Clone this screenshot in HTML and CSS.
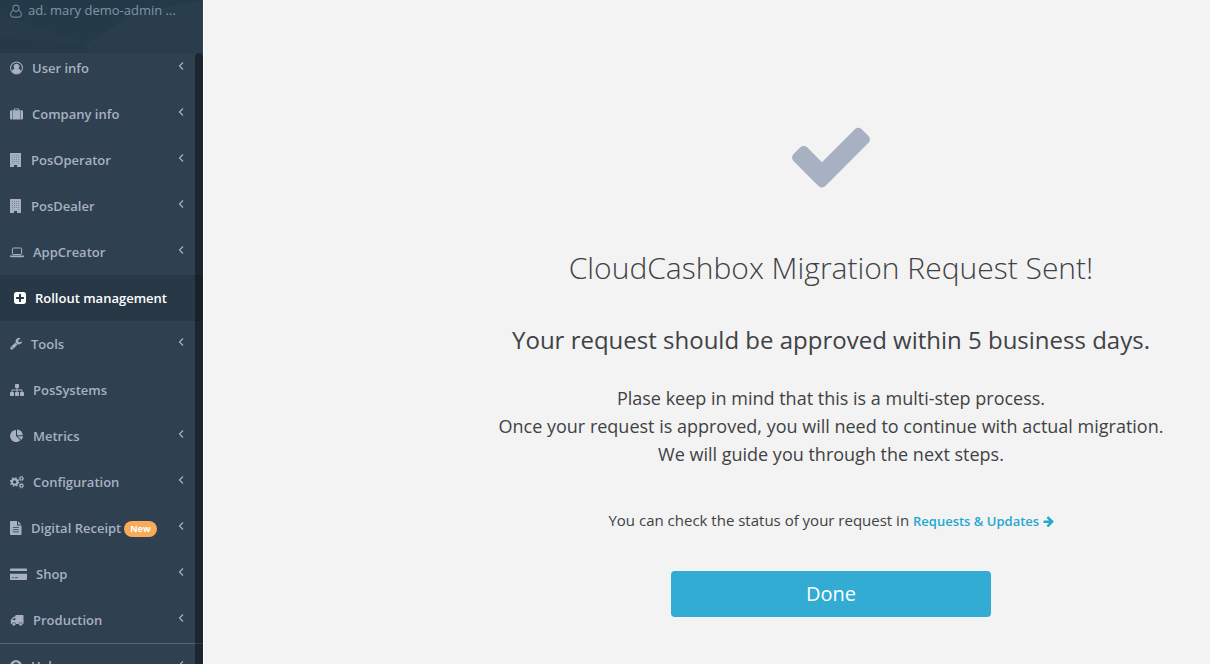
FILE: index.html
```html
<!DOCTYPE html>
<html lang="en">
<head>
<meta charset="utf-8">
<title>CloudCashbox Migration</title>
<link rel="stylesheet" href="styles.css">
</head>
<body>
<div class="app">
  <aside class="sidebar">
    <div class="profile">
      <svg class="facets" viewBox="0 0 203 53" preserveAspectRatio="none" aria-hidden="true"><path fill="#273b4a" d="M0 14 86 44 100 53H0z"/><path fill="#293d4c" d="M86 44 130 15 203 0V53H90z"/><path fill="#253947" d="M0 38 86 44 80 53H0z"/></svg>
      <svg class="icon w12" viewBox="0 0 12 14" fill="none" stroke="currentColor" aria-hidden="true"><circle cx="6" cy="4.2" r="3.2"/><path d="M3.3 6.4C1.3 7 .7 8.8.7 10.900q0 2.200 2 2.200h6.600q2 0 2-2.200C11.300 8.800 10.700 7 8.700 6.400"/></svg>
      <span class="profile-name">ad. mary demo-admin ...</span>
    </div>
    <div class="scroller">
      <nav class="menu">
        <a class="item" href="#"><svg class="icon w13" viewBox="0 0 14 14" aria-hidden="true"><circle cx="7" cy="7" r="6.400" fill="none" stroke="currentColor" stroke-width="1.100"/><path fill="currentColor" d="M7 2.400a3.100 3.100 0 0 1 2.100 5.400c1.700.3 2.600 1.500 2.800 3.300A6 6 0 0 1 7 13.300a6 6 0 0 1-4.900-2.200c.2-1.800 1.100-3 2.800-3.300A3.100 3.100 0 0 1 7 2.400z"/></svg><span>User info</span><svg class="chev" viewBox="0 0 6 10"><path d="M5 1.500 1.500 5 5 8.500"/></svg></a>
        <a class="item" href="#"><svg class="icon w13" viewBox="0 0 14 14" fill="currentColor" aria-hidden="true"><path fill-rule="evenodd" d="M4 3V1.800Q4 1 4.800 1h4.400q.8 0 .8.800V3h.9v10H3.100V3zm1 0h4V2H5zM2.600 3v10H1.500Q0 13 0 11.500v-7Q0 3 1.500 3zM11.400 3h1.100Q14 3 14 4.500v7q0 1.500-1.500 1.500h-1.100z"/></svg><span>Company info</span><svg class="chev" viewBox="0 0 6 10"><path d="M5 1.500 1.500 5 5 8.500"/></svg></a>
        <a class="item" href="#"><svg class="icon w12" viewBox="0 0 12 14" aria-hidden="true"><path fill="currentColor" d="M.5 0h10q.5 0 .5.500v13q0 .5-.5.500H7v-2H4v2H.5q-.5 0-.5-.5V.5Q0 0 .5 0z"/><path stroke="#2f4050" stroke-opacity=".6" stroke-width=".6" stroke-dasharray="1 1" d="M2.400 2v9M4.500 2v8M6.500 2v8M8.600 2v9"/></svg><span>PosOperator</span><svg class="chev" viewBox="0 0 6 10"><path d="M5 1.500 1.500 5 5 8.500"/></svg></a>
        <a class="item" href="#"><svg class="icon w12" viewBox="0 0 12 14" aria-hidden="true"><path fill="currentColor" d="M.5 0h10q.5 0 .5.500v13q0 .5-.5.500H7v-2H4v2H.5q-.5 0-.5-.5V.5Q0 0 .5 0z"/><path stroke="#2f4050" stroke-opacity=".6" stroke-width=".6" stroke-dasharray="1 1" d="M2.400 2v9M4.500 2v8M6.500 2v8M8.600 2v9"/></svg><span>PosDealer</span><svg class="chev" viewBox="0 0 6 10"><path d="M5 1.500 1.500 5 5 8.500"/></svg></a>
        <a class="item" href="#"><svg class="icon w14" viewBox="0 0 14 14" aria-hidden="true"><rect x="2.400" y="3" width="9.200" height="6.500" rx=".7" fill="none" stroke="currentColor"/><path fill="currentColor" d="M0 10.600h14v.7q0 .9-1.100.9H1.100Q0 12.200 0 11.300z"/></svg><span>AppCreator</span><svg class="chev" viewBox="0 0 6 10"><path d="M5 1.500 1.500 5 5 8.500"/></svg></a>
        <a class="item active" href="#" aria-current="page"><svg class="icon w12" viewBox="128 128 1536 1536" fill="currentColor" aria-hidden="true"><path d="M1408 960v-128q0-26-19-45t-45-19h-320v-320q0-26-19-45t-45-19h-128q-26 0-45 19t-19 45v320h-320q-26 0-45 19t-19 45v128q0 26 19 45t45 19h320v320q0 26 19 45t45 19h128q26 0 45-19t19-45v-320h320q26 0 45-19t19-45zm256-544v960q0 119-84.500 203.500t-203.500 84.500h-960q-119 0-203.500-84.500t-84.500-203.500v-960q0-119 84.500-203.500t203.500-84.500h960q119 0 203.500 84.500t84.500 203.500z"/></svg><span>Rollout management</span></a>
        <a class="item" href="#"><svg class="icon w12" viewBox="64 128 1664 1664" fill="currentColor" aria-hidden="true"><path d="M448 1472q0-26-19-45t-45-19-45 19-19 45 19 45 45 19 45-19 19-45zm644-420l-682 682q-37 37-90 37-52 0-91-37l-106-108q-38-36-38-90 0-53 38-91l681-681q39 98 114.500 173.500t173.500 114.500zm634-435q0 39-23 106-47 134-164.500 217.500t-258.500 83.500q-185 0-316.500-131.500t-131.500-316.500 131.500-316.500 316.500-131.500q58 0 121.500 16.500t107.500 46.500q16 11 16 28t-16 28l-293 169v224l193 107q5-3 79-48.500t135.500-81 70.500-35.500q15 0 23.500 10t8.500 25z"/></svg><span>Tools</span><svg class="chev" viewBox="0 0 6 10"><path d="M5 1.500 1.500 5 5 8.500"/></svg></a>
        <a class="item" href="#"><svg class="icon w14" viewBox="0 0 1792 1792" fill="currentColor" aria-hidden="true"><path d="M1792 1248v320q0 40-28 68t-68 28h-320q-40 0-68-28t-28-68v-320q0-40 28-68t68-28h96v-192h-512v192h96q40 0 68 28t28 68v320q0 40-28 68t-68 28h-320q-40 0-68-28t-28-68v-320q0-40 28-68t68-28h96v-192h-512v192h96q40 0 68 28t28 68v320q0 40-28 68t-68 28h-320q-40 0-68-28t-28-68v-320q0-40 28-68t68-28h96v-192q0-52 38-90t90-38h512v-192h-96q-40 0-68-28t-28-68v-320q0-40 28-68t68-28h320q40 0 68 28t28 68v320q0 40-28 68t-68 28h-96v192h512q52 0 90 38t38 90v192h96q40 0 68 28t28 68z"/></svg><span>PosSystems</span></a>
        <a class="item" href="#"><svg class="icon w14" viewBox="0 0 14 14" fill="currentColor" aria-hidden="true"><path d="M6 1v6l4.300 4.300A6 6 0 1 1 6 1z"/><path d="M7.500 7.200H13a6 6 0 0 1-1.700 3.800z"/><path d="M7 .5a5.800 5.800 0 0 1 5.800 5.800H7z"/></svg><span>Metrics</span><svg class="chev" viewBox="0 0 6 10"><path d="M5 1.500 1.500 5 5 8.500"/></svg></a>
        <a class="item" href="#"><svg class="icon w14" viewBox="0 0 14 14" fill="none" stroke="currentColor" aria-hidden="true"><circle cx="4.600" cy="7" r="2.700" stroke-width="1.900"/><circle cx="4.600" cy="7" r="4.100" stroke-width="1.400" stroke-dasharray="1.610 1.610"/><circle cx="11.400" cy="3.500" r="1.500" stroke-width="1.200"/><circle cx="11.400" cy="3.500" r="2.300" stroke-width=".8" stroke-dasharray="1 .8"/><circle cx="11.400" cy="10.700" r="1.500" stroke-width="1.200"/><circle cx="11.400" cy="10.700" r="2.300" stroke-width=".8" stroke-dasharray="1 .8"/></svg><span>Configuration</span><svg class="chev" viewBox="0 0 6 10"><path d="M5 1.500 1.500 5 5 8.500"/></svg></a>
        <a class="item" href="#"><svg class="icon w12" viewBox="0 0 12 14" aria-hidden="true"><path fill="currentColor" d="M.8 0H7v4.500h4.500v8.700q0 .8-.8.800H.8q-.8 0-.8-.8V.8Q0 0 .8 0zM8 .2 11.300 3.500H8z"/><path stroke="#2f4050" stroke-width=".8" d="M2.800 6.500h6M2.800 8.700h6M2.800 10.900h6"/></svg><span>Digital Receipt<b class="badge">New</b></span><svg class="chev" viewBox="0 0 6 10"><path d="M5 1.500 1.500 5 5 8.500"/></svg></a>
        <a class="item" href="#"><svg class="icon w17" viewBox="0 0 17 14" aria-hidden="true"><path fill="currentColor" d="M1 1.500h15q1 0 1 1V4H0V2.500q0-1 1-1zM0 6.700h17V12q0 1-1 1H1q-1 0-1-1z"/><path stroke="#2f4050" stroke-opacity=".8" d="M2 10.700h2M5 10.700h3"/></svg><span>Shop</span><svg class="chev" viewBox="0 0 6 10"><path d="M5 1.500 1.500 5 5 8.500"/></svg></a>
        <a class="item" href="#"><svg class="icon w14" viewBox="0 0 14 14" aria-hidden="true"><path fill="currentColor" fill-rule="evenodd" d="M6 2h6.900q.6 0 .6.600v8.500H.8V7.200q0-.5.400-.9L3.600 4q.4-.4.900-.4h.9V2.600Q5.400 2 6 2zM2 7h3.400V4.900h-.8z"/><g fill="currentColor" stroke="#2f4050" stroke-width=".6"><circle cx="3.900" cy="11.300" r="1.800"/><circle cx="10.700" cy="11.300" r="1.800"/></g></svg><span>Production</span><svg class="chev" viewBox="0 0 6 10"><path d="M5 1.500 1.500 5 5 8.500"/></svg></a>
        <a class="item divided" href="#"><svg class="icon w12" viewBox="0 0 12 14" aria-hidden="true"><circle cx="6" cy="7" r="6" fill="currentColor"/><path d="M4 5.500Q4.200 4 6 4t2 1.500Q8 6.500 6 7.500v1M6 9.500V11" fill="none" stroke="#2f4050" stroke-width="1.500"/></svg><span>Help</span><svg class="chev" viewBox="0 0 6 10"><path d="M5 1.500 1.500 5 5 8.500"/></svg></a>
      </nav>
      <div class="track"></div>
    </div>
  </aside>
  <main class="content">
    <svg class="check" viewBox="0 0 1792 1792" fill="currentColor" aria-hidden="true"><path d="M1671 566q0 40-28 68l-724 724-136 136q-28 28-68 28t-68-28l-136-136-362-362q-28-28-28-68t28-68l136-136q28-28 68-28t68 28l294 295 656-657q28-28 68-28t68 28l136 136q28 28 28 68z"/></svg>
    <h1 class="title">CloudCashbox Migration Request Sent!</h1>
    <h2 class="subtitle">Your request should be approved within 5 business days.</h2>
    <p class="details">Plase keep in mind that this is a multi-step process.<br>Once your request is approved, you will need to continue with actual migration.<br>We will guide you through the next steps.</p>
    <p class="status">You can check the status of your request in <a class="link" href="#">Requests &amp; Updates <svg class="arrow" viewBox="64 128 1600 1600" fill="currentColor" aria-hidden="true"><path d="M1600 960q0 54-37 91l-651 651q-39 37-91 37-51 0-90-37l-75-75q-38-38-38-91t38-91l293-293h-704q-52 0-84.500-37.500t-32.500-90.500v-128q0-53 32.500-90.500t84.500-37.500h704l-293-294q-38-36-38-90t38-90l75-75q38-38 90-38 53 0 91 38l651 651q37 35 37 90z"/></svg></a></p>
    <button class="done" type="button">Done</button>
  </main>
</div>
</body>
</html>
```
FILE: styles.css
```css
* { box-sizing: border-box; }
body {
  margin: 0;
  background: #f3f3f3;
  color: #3f4244;
  font-family: "Open Sans", "Noto Sans", sans-serif;
}
.app {
  display: flex;
  height: 100vh;
  overflow: hidden;
}
.sidebar {
  display: flex;
  flex-direction: column;
  flex: 0 0 203px;
  background: #2f4050;
  color: #a7b1c2;
}
.profile {
  position: relative;
  display: flex;
  gap: 6px;
  flex: 0 0 53px;
  padding: 0 10px;
  background: #253a49;
  color: #8095a8;
  font-size: 13px;
  line-height: 20px;
}
.facets {
  position: absolute;
  inset: 0;
  width: 100%;
  height: 100%;
}
.profile .icon { position: relative; margin-top: 4px; }
.profile-name { position: relative; white-space: nowrap; }
.scroller {
  position: relative;
  flex: 1;
  min-height: 0;
  overflow: hidden;
}
.menu { margin-top: -8px; }
.track {
  position: absolute;
  top: 0;
  right: 0;
  bottom: 0;
  width: 8px;
  background: rgba(0, 0, 0, 0.4);
  border-radius: 4px 4px 0 0;
}
.item {
  display: flex;
  align-items: center;
  gap: 9px;
  height: 46px;
  padding: 0 19px 1px 10px;
  color: inherit;
  font-size: 13px;
  font-weight: 600;
  line-height: 20px;
  text-decoration: none;
  white-space: nowrap;
}
.item.active {
  padding-left: 14px;
  background: #293846;
  color: #fff;
}
.item.divided { border-top: 1px solid #566675; }
.icon { flex: none; height: 14px; }
.w12 { width: 12px; }
.w13 { width: 13px; }
.w14 { width: 14px; }
.w17 { width: 17px; }
.chev {
  width: 6px;
  height: 10px;
  margin: 0 0 3px auto;
  fill: none;
  stroke: currentColor;
  stroke-width: 1.2;
}
.badge {
  display: inline-block;
  margin-left: 3px;
  padding: 0 6px;
  border-radius: 8px;
  background: #f8ac59;
  color: #fff;
  font-size: 9px;
  font-weight: 700;
  line-height: 16px;
  vertical-align: middle;
}
.content {
  display: flex;
  flex: 1;
  flex-direction: column;
  align-items: center;
  padding: 111px 0 0 248px;
  text-align: center;
  border-left: 1px solid #fff;
}
.check { width: 90px; height: 90px; color: #a7b1c2; }
.title {
  margin: 47px 0 0;
  font-size: 30px;
  font-weight: 300;
  line-height: 40px;
}
.subtitle {
  margin: 32px 0 0;
  font-size: 24px;
  font-weight: 400;
  line-height: 40px;
}
.details {
  margin: 24px 0 0;
  font-size: 18px;
  line-height: 28px;
}
.status {
  margin: 42px 0 0;
  font-size: 15px;
  line-height: 20px;
}
.link {
  color: #1fa9cf;
  font-size: 13px;
  font-weight: 600;
  text-decoration: none;
}
.arrow { width: 11px; height: 11px; vertical-align: -1px; }
.done {
  width: 320px;
  height: 46px;
  margin-top: 40px;
  border: 0;
  border-radius: 4px;
  background: #32acd3;
  color: #fff;
  font: 400 20px/28px "Open Sans", "Noto Sans", sans-serif;
}
```
